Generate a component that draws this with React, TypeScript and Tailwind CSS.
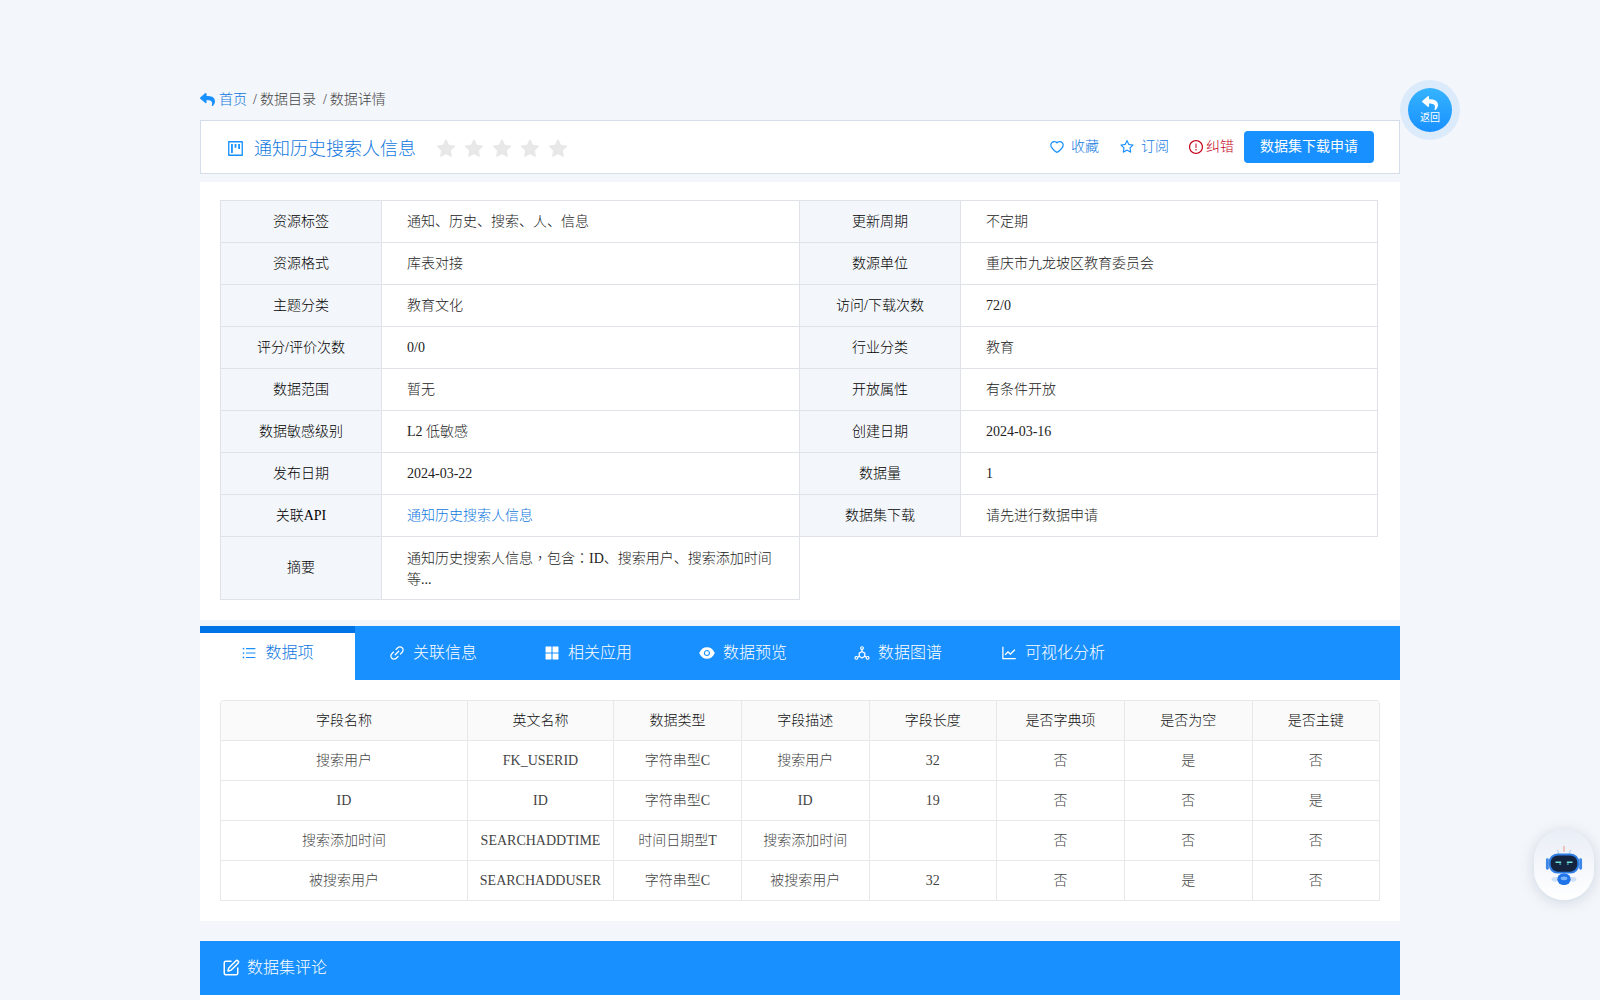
import { AiFillAppstore, AiFillEye, AiFillStar, AiOutlineDeploymentUnit, AiOutlineExclamationCircle, AiOutlineHeart, AiOutlineLineChart, AiOutlineLink, AiOutlineProject, AiOutlineStar, AiOutlineUnorderedList } from 'react-icons/ai';
import { FaReply } from 'react-icons/fa';
import { SquarePen } from 'lucide-react';

const infoRows = [
  ['资源标签', '通知、历史、搜索、人、信息', '更新周期', '不定期'],
  ['资源格式', '库表对接', '数源单位', '重庆市九龙坡区教育委员会'],
  ['主题分类', '教育文化', '访问/下载次数', '72/0'],
  ['评分/评价次数', '0/0', '行业分类', '教育'],
  ['数据范围', '暂无', '开放属性', '有条件开放'],
  ['数据敏感级别', 'L2 低敏感', '创建日期', '2024-03-16'],
  ['发布日期', '2024-03-22', '数据量', '1'],
];

const tabs = [
  { icon: AiOutlineLink, label: '关联信息' },
  { icon: AiFillAppstore, label: '相关应用' },
  { icon: AiFillEye, label: '数据预览' },
  { icon: AiOutlineDeploymentUnit, label: '数据图谱' },
  { icon: AiOutlineLineChart, label: '可视化分析' },
];

const fieldHead = ['字段名称', '英文名称', '数据类型', '字段描述', '字段长度', '是否字典项', '是否为空', '是否主键'];

const fieldRows = [
  ['搜索用户', 'FK_USERID', '字符串型C', '搜索用户', '32', '否', '是', '否'],
  ['ID', 'ID', '字符串型C', 'ID', '19', '否', '否', '是'],
  ['搜索添加时间', 'SEARCHADDTIME', '时间日期型T', '搜索添加时间', '', '否', '否', '否'],
  ['被搜索用户', 'SEARCHADDUSER', '字符串型C', '被搜索用户', '32', '否', '是', '否'],
];

const labelCell = 'border border-[#dfe3e8] bg-[#f3f6fa] text-center text-black font-light';
const valueCell = 'border border-[#dfe3e8] pl-[25px] pr-[25px] text-left text-[#222]';
const centredPunct = "font-['Noto_Sans_CJK_TC']";

const Robot = () => (
  <svg width="38" height="42" viewBox="0 0 40 44">
    <line x1="20" y1="2" x2="20" y2="8" stroke="#e9b4a8" strokeWidth="1.5" />
    <path d="M13 6l2 5M27 6l-2 5" stroke="#a9c8ee" strokeWidth="1" />
    <rect x="1" y="15" width="3" height="12" rx="1.5" fill="#3b86e8" />
    <rect x="36" y="15" width="3" height="12" rx="1.5" fill="#3b86e8" />
    <rect x="4" y="10" width="32" height="21" rx="9" fill="#2f7fe6" />
    <rect x="6" y="12" width="28" height="17" rx="7.5" fill="#14243f" />
    <path d="M11 19h6M23 19h6" stroke="#6fe0dc" strokeWidth="1.6" />
    <path d="M15 21h2M23 21h2" stroke="#6fe0dc" strokeWidth="1" />
    <ellipse cx="11" cy="37" rx="4" ry="2.5" fill="#cfe0f7" />
    <ellipse cx="29" cy="37" rx="4" ry="2.5" fill="#cfe0f7" />
    <rect x="13" y="31" width="14" height="12" rx="6" fill="#1f74ea" />
    <ellipse cx="20" cy="36" rx="3.5" ry="2" fill="#7db4f7" />
  </svg>
);

const App = () => {
  return (
    <div
      className="relative min-h-[1000px] h-[1000px] overflow-hidden bg-[#f3f6fa] text-sm font-light"
      style={{ fontFamily: '"Liberation Serif", "Noto Sans CJK SC", serif' }}
    >
      <div className="mx-auto w-[1200px] pt-[90px]">
        {/* breadcrumb */}
        <div className="flex h-5 items-center text-[#444]">
          <FaReply className="mr-[4px] -translate-y-px text-[15px] text-[#1890ff]" />
          <span className="text-[#1077e0]">首页</span>
          <span className="ml-[6px] mr-[3px]">/</span>
          <span>数据目录</span>
          <span className="ml-[7px] mr-[3px]">/</span>
          <span>数据详情</span>
        </div>

        {/* title bar */}
        <div className="mt-[10px] flex h-[54px] items-center border border-[#d3deea] bg-white pl-[25px] pr-[25px]">
          <div className="flex items-center pt-[2px]">
            <AiOutlineProject className="text-[19px] text-[#1890ff]" />
            <span className="ml-[9px] mt-[2px] text-lg text-[#1077e0]">通知历史搜索人信息</span>
            <div className="ml-[19px] mt-[2px] flex gap-[6px] text-[22px] text-[#e8e8e8]">
              {[0, 1, 2, 3, 4].map((i) => (
                <AiFillStar key={i} />
              ))}
            </div>
          </div>
          <div className="ml-auto flex items-center text-[#1077e0]">
            <AiOutlineHeart className="text-[16px] text-[#1890ff]" />
            <span className="ml-[6px]">收藏</span>
            <AiOutlineStar className="ml-5 text-[16px] text-[#1890ff]" />
            <span className="ml-[6px]">订阅</span>
            <span className="ml-[19px] flex items-center text-[#c4001a]">
              <AiOutlineExclamationCircle className="mr-[2px] text-[16px]" />
              纠错
            </span>
            <button className="ml-[10px] h-8 w-[130px] rounded bg-[#1890ff] font-normal text-white">数据集下载申请</button>
          </div>
        </div>

        {/* info */}
        <div className="mt-2 bg-white px-5 pb-5 pt-[18px]">
          <table className="w-[1157px] table-fixed border-collapse">
            <colgroup>
              <col className="w-[161px]" />
              <col className="w-[418px]" />
              <col className="w-[161px]" />
              <col className="w-[417px]" />
            </colgroup>
            <tbody>
              {infoRows.map((row) => (
                <tr key={row[0]} className="h-[42px]">
                  <th className={labelCell}>{row[0]}</th>
                  <td className={valueCell}>{row[1]}</td>
                  <th className={labelCell}>{row[2]}</th>
                  <td className={valueCell}>{row[3]}</td>
                </tr>
              ))}
              <tr className="h-[42px]">
                <th className={labelCell}>关联API</th>
                <td className={valueCell}>
                  <span className="text-[#1077e0]">通知历史搜索人信息</span>
                </td>
                <th className={labelCell}>数据集下载</th>
                <td className={valueCell}>请先进行数据申请</td>
              </tr>
              <tr className="h-[63px]">
                <th className={labelCell}>摘要</th>
                <td className={`${valueCell} leading-[21px]`}>
                  通知历史搜索人信息<span className={centredPunct}>，</span>包含<span className={centredPunct}>：</span>ID、搜索用户、搜索添加时间
                  <br />
                  等...
                </td>
                <td colSpan={2} />
              </tr>
            </tbody>
          </table>
        </div>

        {/* tabs */}
        <div className="mt-[6px] flex h-[54px] bg-[#1890ff] text-base font-normal text-white">
          <div className="h-full w-[155px] border-t-[7px] border-[#0073e6] bg-white">
            <div className="flex h-[40px] items-center justify-center gap-[8px] font-light text-[#1077e0]">
              <AiOutlineUnorderedList className="text-[16px] text-[#1890ff]" />
              <span>数据项</span>
            </div>
          </div>
          {tabs.map((tab) => (
            <div key={tab.label} className="flex h-[54px] w-[155px] items-center justify-center gap-[7px]">
              <tab.icon className="text-[18px]" />
              <span className="font-light">{tab.label}</span>
            </div>
          ))}
        </div>

        {/* fields */}
        <div className="bg-white p-5">
          <table className="w-[1159px] table-fixed border-separate border-spacing-0 overflow-hidden rounded-t border-l border-t border-[#e8e8e8] text-center">
            <colgroup>
              <col className="w-[247px]" />
              <col className="w-[146px]" />
              <col className="w-[128px]" />
              <col className="w-[127.5px]" />
              <col className="w-[127.5px]" />
              <col className="w-[128px]" />
              <col className="w-[127.5px]" />
              <col className="w-[127.5px]" />
            </colgroup>
            <thead>
              <tr className="h-10">
                {fieldHead.map((h) => (
                  <th key={h} className="border-b border-r border-[#e8e8e8] bg-[#fafafa] font-light text-[#111]">
                    {h}
                  </th>
                ))}
              </tr>
            </thead>
            <tbody>
              {fieldRows.map((row) => (
                <tr key={row[0]} className="h-10">
                  {row.map((c, i) => (
                    <td key={i} className="border-b border-r border-[#e8e8e8] text-[#444]">
                      {c}
                    </td>
                  ))}
                </tr>
              ))}
            </tbody>
          </table>
        </div>

        {/* comments */}
        <div className="mt-5 flex h-[54px] items-center bg-[#1890ff] pl-[22px] text-base text-white">
          <SquarePen className="mr-[7px] h-[18px] w-[18px]" />
          数据集评论
        </div>
        <div className="h-5 bg-white" />
      </div>

      {/* back button */}
      <div className="absolute left-[1400px] top-[80px] flex h-[60px] w-[60px] items-center justify-center rounded-full bg-[#dcebfb]">
        <div className="flex h-11 w-11 flex-col items-center justify-center rounded-full bg-gradient-to-b from-[#36b4ff] to-[#1890ff] pb-[2px] text-white">
          <FaReply className="text-[16px]" />
          <span className="text-[10px] font-normal leading-[13px]">返回</span>
        </div>
      </div>

      {/* robot */}
      <div className="absolute left-[1534px] top-[830px] flex h-[70px] w-[60px] items-center justify-center rounded-[30px] bg-gradient-to-b from-[#e9eef6] to-white shadow-[0_2px_14px_rgba(120,140,170,0.3)]">
        <Robot />
      </div>
    </div>
  );
};

export default App;
